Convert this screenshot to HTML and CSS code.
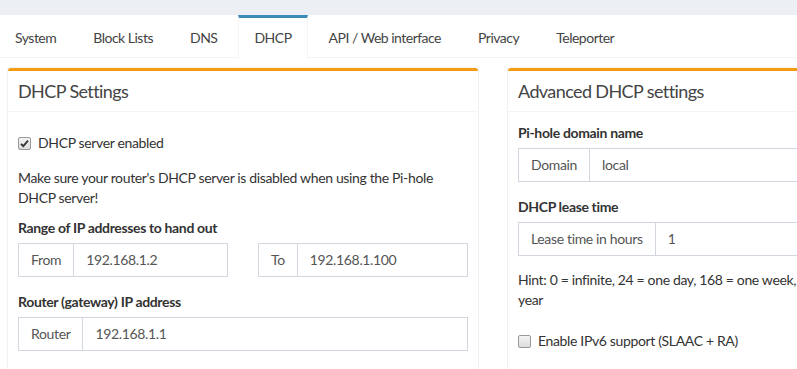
FILE: index.html
```html
<html>
    <head>
        <meta charset="utf-8" />
        <meta name="viewport" content="width=797">
        <link rel="stylesheet" href="styles.css">
    </head>
    <body>
        <div class="page">
            <div class="tabs-box">
                <ul class="nav-tabs">
                    <li><a>System</a></li>
                    <li><a>Block Lists</a></li>
                    <li><a>DNS</a></li>
                    <li class="active"><a>DHCP</a></li>
                    <li><a>API / Web interface</a></li>
                    <li><a>Privacy</a></li>
                    <li><a>Teleporter</a></li>
                </ul>

                <div class="tab-content">
                    <div class="box">
                        <div class="box-header">
                            <h3 class="box-title">DHCP Settings</h3>
                        </div>
                        <div class="box-body">
                            <div class="checkbox">
                                <label>
                                    <span class="check checked">
                                        <svg viewBox="0 0 13 13" width="13" height="13">
                                            <path d="M3 6.8 L5.3 9.2 L10 3.6" fill="none" stroke="#333" stroke-width="1.8"/>
                                        </svg>
                                    </span>
                                    DHCP server enabled
                                </label>
                            </div>
                            <p>Make sure your router's DHCP server is disabled when using the Pi-hole DHCP server!</p>

                            <label class="field-label">Range of IP addresses to hand out</label>
                            <div class="split">
                                <div class="input-group">
                                    <span class="addon">From</span>
                                    <span class="input">192.168.1.2</span>
                                </div>
                                <div class="input-group">
                                    <span class="addon">To</span>
                                    <span class="input">192.168.1.100</span>
                                </div>
                            </div>

                            <label class="field-label">Router (gateway) IP address</label>
                            <div class="input-group">
                                <span class="addon">Router</span>
                                <span class="input">192.168.1.1</span>
                            </div>
                        </div>
                    </div>

                    <div class="box box-wide">
                        <div class="box-header">
                            <h3 class="box-title">Advanced DHCP settings</h3>
                        </div>
                        <div class="box-body">
                            <label class="field-label first">Pi-hole domain name</label>
                            <div class="input-group gap">
                                <span class="addon">Domain</span>
                                <span class="input">local</span>
                            </div>

                            <label class="field-label">DHCP lease time</label>
                            <div class="input-group">
                                <span class="addon">Lease time in hours</span>
                                <span class="input">1</span>
                            </div>

                            <p class="hint">Hint: 0 = infinite, 24 = one day, 168 = one week, 744 = one month, 8760 = one year</p>

                            <div class="checkbox">
                                <label>
                                    <span class="check"></span>
                                    Enable IPv6 support (SLAAC + RA)
                                </label>
                            </div>
                        </div>
                    </div>
                </div>
            </div>
        </div>
    </body>
</html>
```

FILE: styles.css
```css
body {
    margin: 0;
    background-color: #ecf0f5;
    font-family: Lato, "Liberation Sans", sans-serif;
    font-size: 14px;
    line-height: 20px;
    letter-spacing: -0.35px;
    color: #333;
    overflow: hidden;
}

.page {
    padding-top: 15px;
    width: 1000px;
}

.tabs-box {
    background-color: #fff;
    min-height: 400px;
}

.nav-tabs {
    display: flex;
    margin: 0;
    padding: 0;
    list-style: none;
    border-bottom: 1px solid #f4f4f4;
    letter-spacing: -0.5px;
}

.nav-tabs li {
    margin-right: 5px;
    margin-bottom: -1px;
}

.nav-tabs a {
    display: block;
    padding: 10px 15px;
    border-top: 3px solid transparent;
    border-left: 1px solid transparent;
    border-right: 1px solid transparent;
    color: #444;
}

.nav-tabs li:first-child a {
    border-left: 0;
}

.nav-tabs .active a {
    border-top-color: #3c8dbc;
    border-left-color: #f4f4f4;
    border-right-color: #f4f4f4;
    background-color: #fff;
}

.tab-content {
    display: flex;
    gap: 30px;
    padding: 10px 8px;
}

.box {
    width: 470px;
    flex-shrink: 0;
    border-top: 3px solid #f39c12;
    border-radius: 3px;
    box-shadow: 0 1px 1px rgba(0, 0, 0, 0.1), 0 0 0 1px #f4f4f4;
    background-color: #fff;
}

.box-wide {
    width: 480px;
}

.box-header {
    padding: 10px;
    border-bottom: 1px solid #f4f4f4;
}

.box-title {
    margin: 0;
    font-size: 18px;
    font-weight: normal;
    line-height: 18px;
    letter-spacing: -0.6px;
    padding: 1px 0;
    color: #444;
}

.box-body {
    padding: 10px;
}

.checkbox {
    margin: 11px 0 15px 0;
}

.checkbox label {
    display: flex;
    align-items: center;
    gap: 7px;
}

.check {
    display: inline-block;
    width: 11px;
    height: 11px;
    border: 1px solid #999;
    border-radius: 2px;
    background: linear-gradient(#f4f4f4, #dcdcdc);
    position: relative;
}

.check svg {
    position: absolute;
    left: -1px;
    top: -1px;
}

p {
    margin: 0 0 10px 0;
}

.field-label {
    display: block;
    font-weight: bold;
    margin-bottom: 5px;
}

.box-body .first {
    margin-top: 1px;
}

.split {
    display: flex;
    gap: 30px;
    margin-bottom: 15px;
}

.split .input-group {
    flex: 1;
}

.input-group.gap {
    margin-bottom: 15px;
}

.input-group {
    display: flex;
    height: 34px;
    box-sizing: border-box;
}

.addon {
    padding: 6px 12px;
    border: 1px solid #d2d6de;
    border-right: 0;
    color: #555;
}

.input {
    flex: 1;
    padding: 6px 12px;
    border: 1px solid #d2d6de;
    color: #555;
}

.hint {
    margin-top: 14px;
    margin-bottom: 0;
}

.hint + .checkbox {
    margin-top: 21px;
}
```
